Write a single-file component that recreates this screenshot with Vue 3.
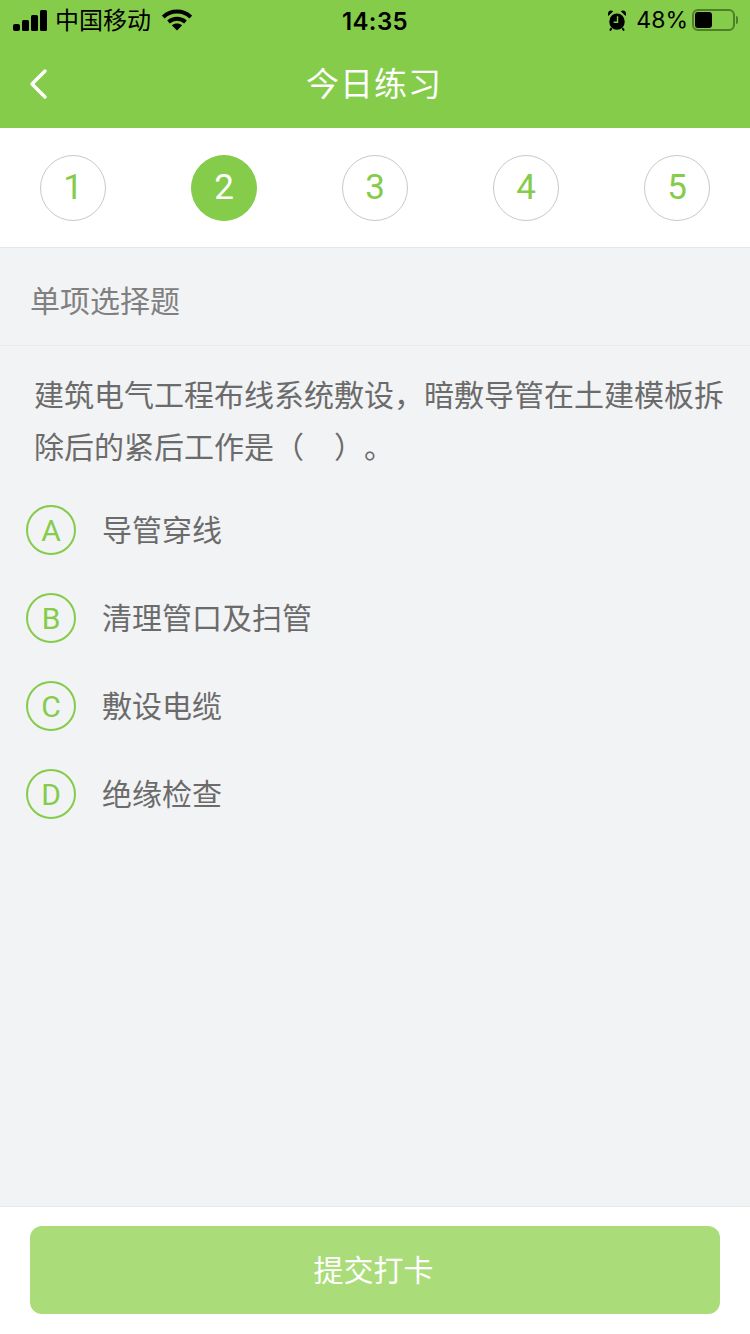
<template>
  <div class="page">
    <div class="header">
      <div class="status-bar">
        <div class="status-left">
          <svg class="signal" width="34" height="21" viewBox="0 0 34 21">
            <rect x="0" y="14" width="7" height="7" rx="2" />
            <rect x="9" y="10" width="7" height="11" rx="1.5" />
            <rect x="18" y="5" width="7" height="16" rx="1.5" />
            <rect x="27" y="0" width="7" height="21" rx="1.5" />
          </svg>
          <span class="carrier">中国移动</span>
          <svg class="wifi" width="30" height="22" viewBox="0 0 30 22">
            <path d="M1.2 8C9 0.8 21 0.8 28.8 8" fill="none" stroke="#000" stroke-width="4" />
            <path d="M6.5 13C11.5 8.8 18.5 8.8 23.5 13" fill="none" stroke="#000" stroke-width="4" />
            <path d="M9.8 16.2L15 21.5L20.2 16.2C17 13.8 13 13.8 9.8 16.2Z" />
          </svg>
        </div>
        <span class="time">14:35</span>
        <div class="status-right">
          <svg class="alarm" width="18" height="21" viewBox="0 0 20 22" preserveAspectRatio="none">
            <circle cx="10" cy="12.2" r="8.6" />
            <path d="M0.4 6.4L5.8 1.4C4 0.2 1.8 0.4 0.8 1.6C-0.2 2.8 -0.2 5 0.4 6.4Z" />
            <path d="M19.6 6.4L14.2 1.4C16 0.2 18.2 0.4 19.2 1.6C20.2 2.8 20.2 5 19.6 6.4Z" />
            <path d="M4 19L2.2 21.6 M16 19L17.8 21.6" stroke="#000" stroke-width="2" />
            <path d="M10.6 6.5V12.8H6.2" fill="none" stroke="#85cc4a" stroke-width="1.6" />
          </svg>
          <span class="percent">48%</span>
          <div class="battery">
            <div class="battery-level" :style="{ width: batteryWidth + 'px' }"></div>
          </div>
          <div class="battery-cap"></div>
        </div>
      </div>
      <div class="nav-bar">
        <svg class="back" width="22" height="34" viewBox="0 0 22 34">
          <path d="M17 4L4 17L17 30" fill="none" stroke="#fff" stroke-width="3.4" stroke-linecap="round" stroke-linejoin="round" />
        </svg>
        <span class="nav-title">今日练习</span>
      </div>
    </div>

    <div class="steps">
      <div v-for="n in 5" :key="n" class="step" :class="{ active: n === current }">{{ n }}</div>
    </div>

    <div class="section-label">单项选择题</div>

    <div class="content">
      <p class="question">建筑电气工程布线系统敷设，暗敷导管在土建模板拆除后的紧后工作是（　）。</p>
      <div class="options">
        <div v-for="opt in options" :key="opt.key" class="option">
          <span class="option-key">{{ opt.key }}</span>
          <span class="option-text">{{ opt.text }}</span>
        </div>
      </div>
    </div>

    <div class="footer">
      <button class="submit">提交打卡</button>
    </div>
  </div>
</template>

<script setup>
const current = 2
const batteryWidth = 17

const options = [
  { key: 'A', text: '导管穿线' },
  { key: 'B', text: '清理管口及扫管' },
  { key: 'C', text: '敷设电缆' },
  { key: 'D', text: '绝缘检查' }
]
</script>

<style>
html, body {
  margin: 0;
  padding: 0;
  background: #f2f3f5;
}
</style>

<style scoped>
.page {
  display: flex;
  flex-direction: column;
  height: 1334px;
  background: #f2f3f5;
  font-family: "Noto Sans CJK SC", "Liberation Sans", sans-serif;
  overflow: hidden;
}

.header {
  background: #85cc4a;
  height: 128px;
  flex-shrink: 0;
}

.status-bar {
  display: flex;
  align-items: center;
  justify-content: space-between;
  height: 40px;
  padding: 0 12px 0 13px;
  color: #000;
  position: relative;
}

.status-left,
.status-right {
  display: flex;
  align-items: center;
}

.carrier {
  margin-left: 8px;
  padding-bottom: 2px;
  font-size: 24px;
  line-height: 38px;
}

.wifi {
  margin-left: 11px;
}

.time {
  position: absolute;
  left: 0;
  right: 0;
  padding-top: 3px;
  text-align: center;
  font-family: "Inter", "Liberation Sans", sans-serif;
  font-size: 24px;
  font-weight: 600;
  line-height: 37px;
  letter-spacing: 0.4px;
}

.alarm {
  margin-right: 10px;
}

.percent {
  padding-top: 1px;
  margin-right: 4px;
  font-family: "Inter", "Liberation Sans", sans-serif;
  font-size: 23px;
  line-height: 39px;
}

.battery {
  display: flex;
  align-items: center;
  box-sizing: border-box;
  width: 43px;
  height: 22px;
  padding: 1px;
  border: 2px solid #4f7f2b;
  border-radius: 6px;
}

.battery-level {
  height: 16px;
  background: #000;
  border-radius: 3px;
}

.battery-cap {
  width: 2px;
  height: 8px;
  margin-left: 1px;
  background: #4f7f2b;
  border-radius: 0 2px 2px 0;
}

.nav-bar {
  position: relative;
  display: flex;
  align-items: center;
  justify-content: center;
  height: 88px;
}

.back {
  position: absolute;
  left: 28px;
  top: 27px;
}

.nav-title {
  padding: 0 2px 4px 0;
  color: #fff;
  font-size: 33px;
  line-height: 84px;
  letter-spacing: 1px;
}

.steps {
  display: flex;
  justify-content: space-between;
  align-items: center;
  height: 119px;
  padding: 0 40px;
  background: #fff;
  border-bottom: 1px solid #e6e7e9;
  flex-shrink: 0;
}

.step {
  display: flex;
  align-items: center;
  justify-content: center;
  box-sizing: border-box;
  width: 66px;
  height: 66px;
  border: 1px solid #c9c9c9;
  border-radius: 50%;
  color: #85cc4a;
  font-family: Roboto, "Liberation Sans", sans-serif;
  font-size: 35px;
}

.step.active {
  background: #85cc4a;
  border-color: #85cc4a;
  color: #fff;
}

.section-label {
  height: 97px;
  padding-left: 30px;
  border-bottom: 1px solid #e9eaec;
  color: #808080;
  font-size: 30px;
  line-height: 103px;
  flex-shrink: 0;
  overflow: hidden;
}

.content {
  flex: 1;
}

.question {
  margin: 21px 20px 0 34px;
  color: #6b6b6b;
  font-size: 30px;
  line-height: 52px;
  text-spacing-trim: space-all;
}

.options {
  display: flex;
  flex-direction: column;
  gap: 38px;
  margin-top: 34px;
  padding-left: 26px;
}

.option {
  display: flex;
  align-items: center;
  height: 50px;
}

.option-key {
  display: flex;
  align-items: center;
  justify-content: center;
  box-sizing: border-box;
  width: 50px;
  height: 50px;
  border: 2px solid #85cc4a;
  border-radius: 50%;
  color: #85cc4a;
  font-family: Roboto, "Liberation Sans", sans-serif;
  font-size: 30px;
}

.option-text {
  margin-left: 26px;
  padding-bottom: 4px;
  color: #6b6b6b;
  font-size: 30px;
  line-height: 46px;
}

.footer {
  box-sizing: border-box;
  height: 128px;
  padding: 19px 30px 0;
  background: #fff;
  border-top: 1px solid #e6e7e9;
  flex-shrink: 0;
}

.submit {
  display: block;
  width: 100%;
  height: 88px;
  padding: 0 3px 4px 0;
  border: none;
  border-radius: 12px;
  background: #aadc79;
  color: #fff;
  font-family: inherit;
  font-size: 30px;
}
</style>
